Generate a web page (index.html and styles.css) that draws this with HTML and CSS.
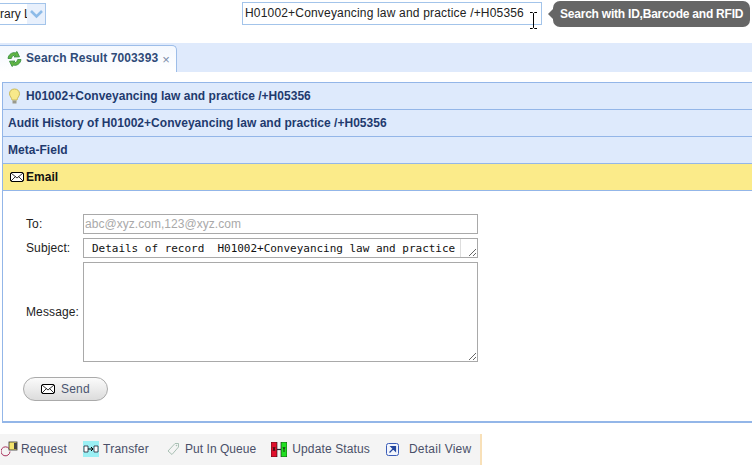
FILE: index.html
```html
<!DOCTYPE html>
<html lang="en">

<head>
    <meta charset="UTF-8">
    <title>Search Result</title>
    <link rel="stylesheet" href="styles.css">
</head>

<body>
    <div class="top">
        <div class="lib">
            <span class="libtext">rary L</span>
            <span class="libarrow">
                <svg width="15" height="10" viewBox="0 0 15 10"><path d="M2 2l5.500 5.500L13 2" fill="none" stroke="#8dbbe8" stroke-width="2.600"/></svg>
            </span>
        </div>
        <div class="searchbox">H01002+Conveyancing law and practice /+H05356</div>
        <div class="tip">Search with ID,Barcode and RFID</div>
        <svg class="cursor" width="9" height="17" viewBox="0 0 9 17"><path d="M1 .5h2.500L4.500 1.500 5.500.5H8M4.500 1.500v14M1 16.500h2.500l1-1 1 1H8" fill="none" stroke="#000"/></svg>
    </div>

    <div class="tabbar">
        <div class="tab">
            <svg class="refresh" width="15" height="16" viewBox="0 0 15 16">
                <path d="M1 7.500C1.500 3.500 5 1 8.500 1.800L10 .5l2.500 5.300-5.500.2 1.500-1.600C6.500 3.800 5 5 4.300 7.500z" fill="#62b544" stroke="#2f8a3a" stroke-width=".8"/>
                <path d="M14 8.500c-.5 4-4 6.500-7.500 5.700L5 15.500 2.500 10.200l5.500-.2-1.500 1.600c2 .6 3.500-.6 4.200-3.100z" fill="#62b544" stroke="#2f8a3a" stroke-width=".8"/>
            </svg>
            <span class="tabtext">Search Result 7003393</span>
            <span class="tabx">&#215;</span>
        </div>
    </div>

    <div class="panel">
        <div class="head">
            <svg class="bulb" width="13" height="17" viewBox="0 0 13 17">
                <path d="M6.500 1C3.500 1 1.500 3 1.500 5.800c0 2.400 2.200 3.700 2.500 6.200h5c.3-2.500 2.500-3.800 2.500-6.200C11.500 3 9.500 1 6.500 1z" fill="#f8e98a" stroke="#c9b95c"/>
                <path d="M4.500 12.500h4v3h-4z" fill="#9a9a8c"/>
            </svg>
            H01002+Conveyancing law and practice /+H05356
        </div>
        <div class="head">Audit History of H01002+Conveyancing law and practice /+H05356</div>
        <div class="head">Meta-Field</div>
        <div class="head head-open">
            <svg class="mail" width="14" height="12" viewBox="0 0 14 12">
                <rect x=".5" y="1.500" width="13" height="9" rx="1.500" fill="#fff" stroke="#000"/>
                <path d="M1 2l6 5 6-5M1 10l4.500-4.500M13 10L8.500 5.500" fill="none" stroke="#000" stroke-width=".8"/>
            </svg>
            Email
        </div>
        <div class="body">
            <div class="row">
                <label class="lbl">To:</label>
                <div class="field field-to">abc@xyz.com,123@xyz.com</div>
            </div>
            <div class="row">
                <label class="lbl">Subject:</label>
                <div class="field field-subject">
                    <span class="subjecttext">Details of record  H01002+Conveyancing law and practice</span>
                    <span class="grip">
                        <svg width="9" height="9" viewBox="0 0 9 9"><path d="M1 8l7-7M5 8l3-3" stroke="#666" stroke-width="1"/></svg>
                    </span>
                </div>
            </div>
            <div class="row row-msg">
                <label class="lbl">Message:</label>
                <div class="field field-msg">
                    <svg class="msggrip" width="9" height="9" viewBox="0 0 9 9"><path d="M1 8l7-7M5 8l3-3" stroke="#666" stroke-width="1"/></svg>
                </div>
            </div>
            <button class="send">
                <svg width="14" height="12" viewBox="0 0 14 12">
                    <rect x=".5" y="1.500" width="13" height="9" rx="1.500" fill="#fff" stroke="#000"/>
                    <path d="M1 2l6 5 6-5M1 10l4.500-4.500M13 10L8.500 5.500" fill="none" stroke="#000" stroke-width=".8"/>
                </svg>
                <span>Send</span>
            </button>
        </div>
    </div>

    <div class="actions">
        <div class="act act-req">
            <svg width="17" height="17" viewBox="0 0 17 17">
                <path d="M8 7.500a4.500 4.500 0 1 0 1 3" fill="none" stroke="#a8305c" stroke-width="1"/>
                <rect x="8" y="1" width="8" height="8" fill="#f4e46c" stroke="#333" stroke-width=".8"/>
                <rect x="13" y="2" width="3" height="6" fill="#444"/>
            </svg>
            Request
        </div>
        <div class="act act-tr">
            <svg class="trbg" width="16" height="16" viewBox="0 0 16 16">
                <rect width="16" height="16" fill="#9bf0f4"/>
                <path d="M1 5h4v6H1zM11 5h4v6h-4z" fill="#fff" stroke="#223" stroke-width=".8"/>
                <path d="M5 8h5M8 6l2 2-2 2" fill="none" stroke="#000"/>
            </svg>
            Transfer
        </div>
        <div class="act act-q">
            <svg width="13" height="14" viewBox="0 0 13 14"><path d="M8 1.500h3.500V5L5 12.500 1 9z" fill="none" stroke="#a9c0b4"/><circle cx="9.500" cy="3.500" r=".8" fill="#a9c0b4"/></svg>
            Put In Queue
        </div>
        <div class="act act-st">
            <svg width="16" height="15" viewBox="0 0 16 15">
                <rect x="0" y="0" width="6" height="15" fill="#e0102c" stroke="#111" stroke-width=".6"/>
                <rect x="10" y="0" width="6" height="15" fill="#22e022" stroke="#111" stroke-width=".6"/>
                <path d="M6 7.500h4" stroke="#223" stroke-width="1.200"/>
                <path d="M2 5l2 4M4 5L2 9M12 5l1 2 1-2M13 7v3" fill="none" stroke="#111" stroke-width=".8"/>
            </svg>
            Update Status
        </div>
        <div class="act act-dv">
            <svg width="13" height="13" viewBox="0 0 13 13">
                <rect x=".5" y=".5" width="12" height="12" rx="2" fill="#f2f5fc" stroke="#3a5cb8"/>
                <path d="M3.500 9.500l5-5M5 3.500h4.500V8z" fill="#24479e" stroke="#24479e" stroke-width="1.200"/>
            </svg>
            Detail View
        </div>
    </div>
</body>

</html>
```

FILE: styles.css
```css
* {
    box-sizing: border-box;
}

html,
body {
    margin: 0;
    padding: 0;
    width: 752px;
    height: 465px;
    overflow: hidden;
    background-color: #fff;
    font-family: "Liberation Sans", Arial, sans-serif;
    font-size: 12px;
}

.top {
    height: 43px;
    position: relative;
    display: flex;
    align-items: flex-start;
    padding-top: 2px;
}

.lib {
    width: 46px;
    height: 22px;
    margin-top: 1px;
    border: 1px solid #a3c4ea;
    border-left: none;
    display: flex;
    color: #222;
}

.libtext {
    width: 27px;
    line-height: 20px;
    white-space: nowrap;
    overflow: hidden;
}

.libarrow {
    width: 18px;
    background-color: #e8f0fc;
    display: flex;
    align-items: center;
    justify-content: center;
}

.searchbox {
    width: 300px;
    height: 23px;
    margin-left: 196px;
    border: 1px solid #a3c4ea;
    padding-left: 2px;
    line-height: 21px;
    color: #222;
    white-space: nowrap;
    letter-spacing: 0.18px;
}

.tip {
    width: 197px;
    height: 26px;
    margin-left: 11px;
    margin-top: -1px;
    background-color: #666;
    border-radius: 7px;
    color: #fff;
    font-weight: bold;
    line-height: 26px;
    padding-left: 7px;
    white-space: nowrap;
    letter-spacing: -0.22px;
    position: relative;
}

.tip::before {
    content: "";
    position: absolute;
    left: -5px;
    top: 8px;
    border-top: 5px solid transparent;
    border-bottom: 5px solid transparent;
    border-right: 5px solid #666;
}

.cursor {
    position: absolute;
    left: 529px;
    top: 12px;
}

.tabbar {
    height: 29px;
    background-color: #dfeafc;
    padding-top: 2px;
}

.tab {
    width: 177px;
    height: 27px;
    background: linear-gradient(#f4f8fe, #fff);
    border: 1px solid #9dbde8;
    border-left: none;
    border-bottom: none;
    border-top-right-radius: 5px;
    display: flex;
    align-items: center;
    padding-left: 7px;
    font-weight: bold;
    color: #2e4a78;
    white-space: nowrap;
}

.refresh {
    margin-right: 4px;
}

.tabtext {
    letter-spacing: 0.1px;
    position: relative;
    top: -1px;
}

.tabx {
    margin-left: 4px;
    font-weight: normal;
    font-size: 13px;
    color: #7a8ca8;
}

.panel {
    width: 760px;
    height: 341px;
    margin: 10px 0 11px 2px;
    border: 2px solid #93b6e8;
    border-top: 1px solid #93b6e8;
    border-right: none;
    border-left: 1px solid #93b6e8;
    display: flex;
    flex-direction: column;
}

.head {
    height: 27px;
    flex: none;
    background-color: #deeafc;
    border-bottom: 1px solid #93b6e8;
    padding-left: 5px;
    display: flex;
    align-items: center;
    font-weight: bold;
    color: #1f3a6e;
    letter-spacing: 0.03px;
}

.bulb {
    margin-right: 5px;
}

.head-open {
    background-color: #fbeb8a;
    color: #111;
    padding-left: 7px;
}

.mail {
    margin-right: 2px;
}

.body {
    padding: 23px 0 0 23px;
    flex: 1;
}

.row {
    display: flex;
    align-items: center;
    margin-bottom: 4px;
    color: #222;
}

.lbl {
    width: 57px;
    letter-spacing: 0.12px;
}

.field {
    width: 395px;
    height: 20px;
    border: 1px solid #a9a9a9;
    background-color: #fff;
}

.field-to {
    color: #a9a9a9;
    line-height: 18px;
    padding-left: 1px;
    white-space: nowrap;
    letter-spacing: 0.04px;
}

.field-subject {
    display: flex;
    justify-content: space-between;
    font-family: "DejaVu Sans Mono", "Liberation Mono", monospace;
    font-size: 11px;
    line-height: 19px;
    white-space: pre;
    color: #111;
    padding-left: 8px;
    letter-spacing: -0.02px;
}

.grip {
    width: 17px;
    border-left: 1px solid #ddd;
    display: flex;
    align-items: flex-end;
    justify-content: flex-end;
}

.row-msg {
    margin-bottom: 15px;
}

.field-msg {
    height: 100px;
    display: flex;
    align-items: flex-end;
    justify-content: flex-end;
}

.send {
    width: 85px;
    height: 24px;
    margin-left: -3px;
    border: 1px solid #aaa;
    border-radius: 12px;
    background: linear-gradient(#fbfbfb, #dcdcdc);
    display: flex;
    align-items: center;
    padding: 0 0 0 17px;
    color: #4a5470;
    font-family: "Liberation Sans", Arial, sans-serif;
    font-size: 12px;
}

.send span {
    margin-left: 6px;
    letter-spacing: 0.2px;
}

.actions {
    width: 482px;
    height: 32px;
    background-color: #f4f4f4;
    display: flex;
    align-items: center;
    padding: 0 0 2px 1px;
    border-right: 2px solid #f8e0b8;
    color: #4a5068;
    letter-spacing: 0.2px;
}

.act {
    display: flex;
    align-items: center;
    gap: 3px;
    white-space: nowrap;
}

.act-tr {
    margin-left: 16px;
    gap: 4px;
}

.act-q {
    margin-left: 18px;
    gap: 5px;
    letter-spacing: 0.05px;
}

.act-st {
    margin-left: 15px;
    gap: 5px;
    letter-spacing: 0.12px;
}

.act-dv {
    margin-left: 16px;
    gap: 10px;
    letter-spacing: 0.25px;
}
```
